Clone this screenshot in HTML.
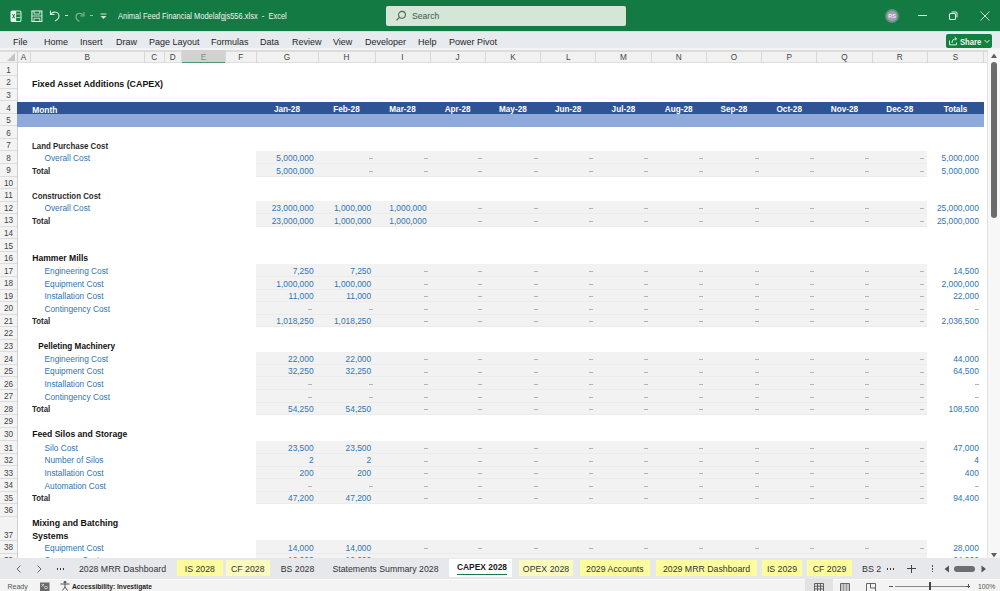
<!DOCTYPE html><html><head><meta charset="utf-8"><style>
html,body{margin:0;padding:0;}
body{width:1000px;height:591px;overflow:hidden;position:relative;background:#fff;font-family:"Liberation Sans", sans-serif;}
.t{position:absolute;white-space:nowrap;line-height:20px;height:20px;}
.b{position:absolute;}
svg{position:absolute;}
</style></head><body>
<div class="b" style="left:0.00px;top:0.00px;width:1000.00px;height:31.00px;background:#137a43;"></div>
<div class="b" style="left:0.00px;top:30.50px;width:1000.00px;height:1.00px;background:#c9e5d2;"></div>
<svg style="left:10px;top:9.5px" width="12" height="12" viewBox="0 0 12 12"><rect x="1" y="1" width="10" height="10.5" rx="1.6" fill="none" stroke="#d9eee0" stroke-width="1.1"/><rect x="1" y="1" width="5.2" height="10.5" rx="1.2" fill="#e4f3e8"/><path d="M2.6 4.2 L4.6 8.2 M4.6 4.2 L2.6 8.2" stroke="#137a43" stroke-width="1"/><path d="M6.5 4 H10.5 M6.5 7.5 H10.5" stroke="#d9eee0" stroke-width="0.8"/></svg>
<svg style="left:31px;top:9.5px" width="12" height="12" viewBox="0 0 12 12"><rect x="0.9" y="1" width="10" height="10.5" fill="none" stroke="#d9eee0" stroke-width="1.1"/><path d="M0.9 6 H10.9 M3 1 V4 H8.8 V1 M3 11.5 V8.2 H8.8 V11.5" fill="none" stroke="#d9eee0" stroke-width="0.9"/></svg>
<svg style="left:49px;top:9px" width="12" height="13" viewBox="0 0 12 13"><path d="M1.5 1.5 V5.5 H5.5" fill="none" stroke="#d9eee0" stroke-width="1.1"/><path d="M1.8 5.2 C4 2 10 2.5 10 7 C10 9.5 8 11 6 12" fill="none" stroke="#d9eee0" stroke-width="1.1"/></svg>
<div class="b" style="left:64.50px;top:14.50px;width:3.50px;height:1.20px;background:#cfe6d6;"></div>
<svg style="left:73px;top:9px" width="14" height="14" viewBox="0 0 14 14" opacity="0.45"><path d="M11 3 L11 7 L7 7" fill="none" stroke="#e8f3ec" stroke-width="1.2"/><path d="M10.5 6.5 C8 3 3 4 3 8 C3 10 4.5 11.5 6.5 12.5" fill="none" stroke="#e8f3ec" stroke-width="1.2"/></svg>
<div class="b" style="left:89.50px;top:14.50px;width:3.50px;height:1.20px;background:#8fc2a2;"></div>
<svg style="left:98px;top:10px" width="12" height="12" viewBox="0 0 12 12"><rect x="2.5" y="3.5" width="6" height="1" fill="#cfe6d6"/><path d="M2.5 6 L8.5 6 L5.5 9 Z" fill="#cfe6d6"/></svg>
<div class="t" style="left:117.50px;top:5.80px;font-size:8.8px;color:#eef6f0;font-weight:normal;transform:scaleX(0.85);transform-origin:left center;">Animal Feed Financial Modelafgjs556.xlsx&nbsp; - &nbsp;Excel</div>
<div class="b" style="left:385.50px;top:5.50px;width:240.00px;height:20.50px;background:#d5e6d9;border-radius:2px;"></div>
<svg style="left:394px;top:9px" width="14" height="14" viewBox="0 0 14 14"><circle cx="8" cy="5.8" r="3.4" fill="none" stroke="#4a6a55" stroke-width="1.1"/><path d="M5.6 8.2 L2.5 11.3" stroke="#4a6a55" stroke-width="1.2"/></svg>
<div class="t" style="left:412.00px;top:5.50px;font-size:8.6px;color:#3d5a47;font-weight:normal;">Search</div>
<svg style="left:883.5px;top:7.8px" width="16" height="16" viewBox="0 0 16 16"><circle cx="8" cy="8" r="7" fill="#5e9474"/><circle cx="8" cy="8" r="5.2" fill="#a39bb9"/><text x="8" y="10.2" font-size="5.5" text-anchor="middle" fill="#ece8f4" font-family="Liberation Sans" font-weight="bold">RS</text></svg>
<div class="b" style="left:918.00px;top:14.80px;width:9.00px;height:1.20px;background:#e8f3ec;"></div>
<svg style="left:947px;top:10px" width="12" height="12" viewBox="0 0 12 12"><rect x="2.5" y="3.5" width="6" height="6" rx="1" fill="none" stroke="#e8f3ec" stroke-width="1.1"/><path d="M4.5 2 L9 2 Q10 2 10 3 L10 7.5" fill="none" stroke="#e8f3ec" stroke-width="1"/></svg>
<svg style="left:978px;top:9px" width="14" height="14" viewBox="0 0 14 14"><path d="M2.5 2.5 L11.5 11.5 M11.5 2.5 L2.5 11.5" stroke="#d8ece0" stroke-width="0.9"/></svg>
<div class="b" style="left:0.00px;top:31.50px;width:1000.00px;height:16.50px;background:#e7eaee;"></div>
<div class="t" style="left:13.00px;top:31.50px;font-size:9px;color:#262626;font-weight:normal;">File</div>
<div class="t" style="left:44.00px;top:31.50px;font-size:9px;color:#262626;font-weight:normal;">Home</div>
<div class="t" style="left:80.00px;top:31.50px;font-size:9px;color:#262626;font-weight:normal;">Insert</div>
<div class="t" style="left:116.00px;top:31.50px;font-size:9px;color:#262626;font-weight:normal;">Draw</div>
<div class="t" style="left:149.00px;top:31.50px;font-size:9px;color:#262626;font-weight:normal;">Page Layout</div>
<div class="t" style="left:211.00px;top:31.50px;font-size:9px;color:#262626;font-weight:normal;">Formulas</div>
<div class="t" style="left:260.00px;top:31.50px;font-size:9px;color:#262626;font-weight:normal;">Data</div>
<div class="t" style="left:292.00px;top:31.50px;font-size:9px;color:#262626;font-weight:normal;">Review</div>
<div class="t" style="left:333.00px;top:31.50px;font-size:9px;color:#262626;font-weight:normal;">View</div>
<div class="t" style="left:365.00px;top:31.50px;font-size:9px;color:#262626;font-weight:normal;">Developer</div>
<div class="t" style="left:418.00px;top:31.50px;font-size:9px;color:#262626;font-weight:normal;">Help</div>
<div class="t" style="left:449.00px;top:31.50px;font-size:9px;color:#262626;font-weight:normal;">Power Pivot</div>
<div class="b" style="left:946.00px;top:33.50px;width:46.30px;height:14.80px;background:#14803f;border-radius:2px;"></div>
<svg style="left:947.5px;top:36px" width="10" height="10" viewBox="0 0 10 10"><path d="M1.5 4.5 V8.8 H8.5 V6.5" fill="none" stroke="#d6f0de" stroke-width="1"/><path d="M4 7 C4 4 5.5 2.8 8.5 2.8 M6.8 1.2 L8.6 2.8 L6.8 4.4" fill="none" stroke="#d6f0de" stroke-width="1"/></svg>
<div class="t" style="left:959.70px;top:31.50px;font-size:8.8px;color:#f0f8f2;font-weight:bold;transform:scaleX(0.87);transform-origin:left center;">Share</div>
<svg style="left:983px;top:37px" width="8" height="8" viewBox="0 0 8 8"><path d="M1.5 3 L4 5.5 L6.5 3" fill="none" stroke="#e6f4ea" stroke-width="1"/></svg>
<div class="b" style="left:0.00px;top:48.00px;width:1000.00px;height:2.50px;background:#f4f4f4;"></div>
<div class="b" style="left:0.00px;top:50.30px;width:987.50px;height:1.30px;background:#dcdcdc;"></div>
<div class="b" style="left:0.00px;top:51.60px;width:987.50px;height:10.20px;background:#f1f1f1;"></div>
<div class="b" style="left:0.00px;top:61.60px;width:987.50px;height:1.70px;background:#dedede;"></div>
<svg style="left:3px;top:52px" width="13" height="10" viewBox="0 0 13 10"><path d="M12 1 L12 9 L4 9 Z" fill="#c4c4c4"/></svg>
<div class="b" style="left:16.60px;top:50.00px;width:0.90px;height:13.00px;background:#d0d0d0;"></div>
<div class="t" style="left:-126.50px;width:300px;text-align:center;top:48.20px;font-size:8.2px;color:#444;font-weight:normal;">A</div>
<div class="b" style="left:29.50px;top:51.00px;width:0.80px;height:12.00px;background:#d8d8d8;"></div>
<div class="t" style="left:-62.75px;width:300px;text-align:center;top:48.20px;font-size:8.2px;color:#444;font-weight:normal;">B</div>
<div class="b" style="left:144.00px;top:51.00px;width:0.80px;height:12.00px;background:#d8d8d8;"></div>
<div class="t" style="left:4.25px;width:300px;text-align:center;top:48.20px;font-size:8.2px;color:#444;font-weight:normal;">C</div>
<div class="b" style="left:163.50px;top:51.00px;width:0.80px;height:12.00px;background:#d8d8d8;"></div>
<div class="t" style="left:22.75px;width:300px;text-align:center;top:48.20px;font-size:8.2px;color:#444;font-weight:normal;">D</div>
<div class="b" style="left:181.00px;top:51.00px;width:0.80px;height:12.00px;background:#d8d8d8;"></div>
<div class="b" style="left:181.50px;top:50.30px;width:44.00px;height:12.50px;background:#d2d2d2;"></div>
<div class="b" style="left:181.50px;top:61.50px;width:44.00px;height:1.60px;background:#4f9a6a;"></div>
<div class="t" style="left:53.50px;width:300px;text-align:center;top:48.20px;font-size:8.2px;color:#7d8c82;font-weight:normal;">E</div>
<div class="b" style="left:225.00px;top:51.00px;width:0.80px;height:12.00px;background:#d8d8d8;"></div>
<div class="t" style="left:90.75px;width:300px;text-align:center;top:48.20px;font-size:8.2px;color:#444;font-weight:normal;">F</div>
<div class="b" style="left:255.50px;top:51.00px;width:0.80px;height:12.00px;background:#d8d8d8;"></div>
<div class="t" style="left:137.00px;width:300px;text-align:center;top:48.20px;font-size:8.2px;color:#444;font-weight:normal;">G</div>
<div class="b" style="left:317.50px;top:51.00px;width:0.80px;height:12.00px;background:#d8d8d8;"></div>
<div class="t" style="left:196.50px;width:300px;text-align:center;top:48.20px;font-size:8.2px;color:#444;font-weight:normal;">H</div>
<div class="b" style="left:374.50px;top:51.00px;width:0.80px;height:12.00px;background:#d8d8d8;"></div>
<div class="t" style="left:252.50px;width:300px;text-align:center;top:48.20px;font-size:8.2px;color:#444;font-weight:normal;">I</div>
<div class="b" style="left:429.50px;top:51.00px;width:0.80px;height:12.00px;background:#d8d8d8;"></div>
<div class="t" style="left:307.63px;width:300px;text-align:center;top:48.20px;font-size:8.2px;color:#444;font-weight:normal;">J</div>
<div class="b" style="left:484.77px;top:51.00px;width:0.80px;height:12.00px;background:#d8d8d8;"></div>
<div class="t" style="left:362.90px;width:300px;text-align:center;top:48.20px;font-size:8.2px;color:#444;font-weight:normal;">K</div>
<div class="b" style="left:540.03px;top:51.00px;width:0.80px;height:12.00px;background:#d8d8d8;"></div>
<div class="t" style="left:418.17px;width:300px;text-align:center;top:48.20px;font-size:8.2px;color:#444;font-weight:normal;">L</div>
<div class="b" style="left:595.30px;top:51.00px;width:0.80px;height:12.00px;background:#d8d8d8;"></div>
<div class="t" style="left:473.43px;width:300px;text-align:center;top:48.20px;font-size:8.2px;color:#444;font-weight:normal;">M</div>
<div class="b" style="left:650.57px;top:51.00px;width:0.80px;height:12.00px;background:#d8d8d8;"></div>
<div class="t" style="left:528.70px;width:300px;text-align:center;top:48.20px;font-size:8.2px;color:#444;font-weight:normal;">N</div>
<div class="b" style="left:705.83px;top:51.00px;width:0.80px;height:12.00px;background:#d8d8d8;"></div>
<div class="t" style="left:583.97px;width:300px;text-align:center;top:48.20px;font-size:8.2px;color:#444;font-weight:normal;">O</div>
<div class="b" style="left:761.10px;top:51.00px;width:0.80px;height:12.00px;background:#d8d8d8;"></div>
<div class="t" style="left:639.23px;width:300px;text-align:center;top:48.20px;font-size:8.2px;color:#444;font-weight:normal;">P</div>
<div class="b" style="left:816.37px;top:51.00px;width:0.80px;height:12.00px;background:#d8d8d8;"></div>
<div class="t" style="left:694.50px;width:300px;text-align:center;top:48.20px;font-size:8.2px;color:#444;font-weight:normal;">Q</div>
<div class="b" style="left:871.63px;top:51.00px;width:0.80px;height:12.00px;background:#d8d8d8;"></div>
<div class="t" style="left:749.77px;width:300px;text-align:center;top:48.20px;font-size:8.2px;color:#444;font-weight:normal;">R</div>
<div class="b" style="left:926.90px;top:51.00px;width:0.80px;height:12.00px;background:#d8d8d8;"></div>
<div class="t" style="left:805.50px;width:300px;text-align:center;top:48.20px;font-size:8.2px;color:#444;font-weight:normal;">S</div>
<div class="b" style="left:983.10px;top:51.00px;width:0.80px;height:12.00px;background:#d8d8d8;"></div>
<div class="b" style="left:0.00px;top:63.00px;width:17.00px;height:496.50px;background:#f3f3f3;"></div>
<div class="b" style="left:16.60px;top:63.00px;width:0.90px;height:496.50px;background:#cfcfcf;"></div>
<div class="b" style="left:0.00px;top:75.15px;width:16.60px;height:0.80px;background:#dcdcdc;"></div>
<div class="t" style="left:-141.50px;width:300px;text-align:center;top:60.88px;font-size:8.2px;color:#444;font-weight:normal;">1</div>
<div class="b" style="left:0.00px;top:87.70px;width:16.60px;height:0.80px;background:#dcdcdc;"></div>
<div class="t" style="left:-141.50px;width:300px;text-align:center;top:73.42px;font-size:8.2px;color:#444;font-weight:normal;">2</div>
<div class="b" style="left:0.00px;top:100.25px;width:16.60px;height:0.80px;background:#dcdcdc;"></div>
<div class="t" style="left:-141.50px;width:300px;text-align:center;top:85.97px;font-size:8.2px;color:#444;font-weight:normal;">3</div>
<div class="b" style="left:0.00px;top:112.80px;width:16.60px;height:0.80px;background:#dcdcdc;"></div>
<div class="t" style="left:-141.50px;width:300px;text-align:center;top:98.52px;font-size:8.2px;color:#444;font-weight:normal;">4</div>
<div class="b" style="left:0.00px;top:125.35px;width:16.60px;height:0.80px;background:#dcdcdc;"></div>
<div class="t" style="left:-141.50px;width:300px;text-align:center;top:111.07px;font-size:8.2px;color:#444;font-weight:normal;">5</div>
<div class="b" style="left:0.00px;top:137.90px;width:16.60px;height:0.80px;background:#dcdcdc;"></div>
<div class="t" style="left:-141.50px;width:300px;text-align:center;top:123.62px;font-size:8.2px;color:#444;font-weight:normal;">6</div>
<div class="b" style="left:0.00px;top:150.45px;width:16.60px;height:0.80px;background:#dcdcdc;"></div>
<div class="t" style="left:-141.50px;width:300px;text-align:center;top:136.17px;font-size:8.2px;color:#444;font-weight:normal;">7</div>
<div class="b" style="left:0.00px;top:163.00px;width:16.60px;height:0.80px;background:#dcdcdc;"></div>
<div class="t" style="left:-141.50px;width:300px;text-align:center;top:148.72px;font-size:8.2px;color:#444;font-weight:normal;">8</div>
<div class="b" style="left:0.00px;top:175.55px;width:16.60px;height:0.80px;background:#dcdcdc;"></div>
<div class="t" style="left:-141.50px;width:300px;text-align:center;top:161.28px;font-size:8.2px;color:#444;font-weight:normal;">9</div>
<div class="b" style="left:0.00px;top:188.10px;width:16.60px;height:0.80px;background:#dcdcdc;"></div>
<div class="t" style="left:-141.50px;width:300px;text-align:center;top:173.83px;font-size:8.2px;color:#444;font-weight:normal;">10</div>
<div class="b" style="left:0.00px;top:200.65px;width:16.60px;height:0.80px;background:#dcdcdc;"></div>
<div class="t" style="left:-141.50px;width:300px;text-align:center;top:186.38px;font-size:8.2px;color:#444;font-weight:normal;">11</div>
<div class="b" style="left:0.00px;top:213.20px;width:16.60px;height:0.80px;background:#dcdcdc;"></div>
<div class="t" style="left:-141.50px;width:300px;text-align:center;top:198.93px;font-size:8.2px;color:#444;font-weight:normal;">12</div>
<div class="b" style="left:0.00px;top:225.75px;width:16.60px;height:0.80px;background:#dcdcdc;"></div>
<div class="t" style="left:-141.50px;width:300px;text-align:center;top:211.48px;font-size:8.2px;color:#444;font-weight:normal;">13</div>
<div class="b" style="left:0.00px;top:238.30px;width:16.60px;height:0.80px;background:#dcdcdc;"></div>
<div class="t" style="left:-141.50px;width:300px;text-align:center;top:224.03px;font-size:8.2px;color:#444;font-weight:normal;">14</div>
<div class="b" style="left:0.00px;top:250.85px;width:16.60px;height:0.80px;background:#dcdcdc;"></div>
<div class="t" style="left:-141.50px;width:300px;text-align:center;top:236.58px;font-size:8.2px;color:#444;font-weight:normal;">15</div>
<div class="b" style="left:0.00px;top:263.40px;width:16.60px;height:0.80px;background:#dcdcdc;"></div>
<div class="t" style="left:-141.50px;width:300px;text-align:center;top:249.13px;font-size:8.2px;color:#444;font-weight:normal;">16</div>
<div class="b" style="left:0.00px;top:275.95px;width:16.60px;height:0.80px;background:#dcdcdc;"></div>
<div class="t" style="left:-141.50px;width:300px;text-align:center;top:261.68px;font-size:8.2px;color:#444;font-weight:normal;">17</div>
<div class="b" style="left:0.00px;top:288.50px;width:16.60px;height:0.80px;background:#dcdcdc;"></div>
<div class="t" style="left:-141.50px;width:300px;text-align:center;top:274.23px;font-size:8.2px;color:#444;font-weight:normal;">18</div>
<div class="b" style="left:0.00px;top:301.05px;width:16.60px;height:0.80px;background:#dcdcdc;"></div>
<div class="t" style="left:-141.50px;width:300px;text-align:center;top:286.78px;font-size:8.2px;color:#444;font-weight:normal;">19</div>
<div class="b" style="left:0.00px;top:313.60px;width:16.60px;height:0.80px;background:#dcdcdc;"></div>
<div class="t" style="left:-141.50px;width:300px;text-align:center;top:299.33px;font-size:8.2px;color:#444;font-weight:normal;">20</div>
<div class="b" style="left:0.00px;top:326.15px;width:16.60px;height:0.80px;background:#dcdcdc;"></div>
<div class="t" style="left:-141.50px;width:300px;text-align:center;top:311.88px;font-size:8.2px;color:#444;font-weight:normal;">21</div>
<div class="b" style="left:0.00px;top:338.70px;width:16.60px;height:0.80px;background:#dcdcdc;"></div>
<div class="t" style="left:-141.50px;width:300px;text-align:center;top:324.43px;font-size:8.2px;color:#444;font-weight:normal;">22</div>
<div class="b" style="left:0.00px;top:351.25px;width:16.60px;height:0.80px;background:#dcdcdc;"></div>
<div class="t" style="left:-141.50px;width:300px;text-align:center;top:336.98px;font-size:8.2px;color:#444;font-weight:normal;">23</div>
<div class="b" style="left:0.00px;top:363.80px;width:16.60px;height:0.80px;background:#dcdcdc;"></div>
<div class="t" style="left:-141.50px;width:300px;text-align:center;top:349.53px;font-size:8.2px;color:#444;font-weight:normal;">24</div>
<div class="b" style="left:0.00px;top:376.35px;width:16.60px;height:0.80px;background:#dcdcdc;"></div>
<div class="t" style="left:-141.50px;width:300px;text-align:center;top:362.08px;font-size:8.2px;color:#444;font-weight:normal;">25</div>
<div class="b" style="left:0.00px;top:388.90px;width:16.60px;height:0.80px;background:#dcdcdc;"></div>
<div class="t" style="left:-141.50px;width:300px;text-align:center;top:374.63px;font-size:8.2px;color:#444;font-weight:normal;">26</div>
<div class="b" style="left:0.00px;top:401.45px;width:16.60px;height:0.80px;background:#dcdcdc;"></div>
<div class="t" style="left:-141.50px;width:300px;text-align:center;top:387.18px;font-size:8.2px;color:#444;font-weight:normal;">27</div>
<div class="b" style="left:0.00px;top:414.00px;width:16.60px;height:0.80px;background:#dcdcdc;"></div>
<div class="t" style="left:-141.50px;width:300px;text-align:center;top:399.73px;font-size:8.2px;color:#444;font-weight:normal;">28</div>
<div class="b" style="left:0.00px;top:426.55px;width:16.60px;height:0.80px;background:#dcdcdc;"></div>
<div class="t" style="left:-141.50px;width:300px;text-align:center;top:412.28px;font-size:8.2px;color:#444;font-weight:normal;">29</div>
<div class="b" style="left:0.00px;top:440.30px;width:16.60px;height:0.80px;background:#dcdcdc;"></div>
<div class="t" style="left:-141.50px;width:300px;text-align:center;top:425.43px;font-size:8.2px;color:#444;font-weight:normal;">30</div>
<div class="b" style="left:0.00px;top:452.85px;width:16.60px;height:0.80px;background:#dcdcdc;"></div>
<div class="t" style="left:-141.50px;width:300px;text-align:center;top:438.58px;font-size:8.2px;color:#444;font-weight:normal;">31</div>
<div class="b" style="left:0.00px;top:465.40px;width:16.60px;height:0.80px;background:#dcdcdc;"></div>
<div class="t" style="left:-141.50px;width:300px;text-align:center;top:451.13px;font-size:8.2px;color:#444;font-weight:normal;">32</div>
<div class="b" style="left:0.00px;top:477.95px;width:16.60px;height:0.80px;background:#dcdcdc;"></div>
<div class="t" style="left:-141.50px;width:300px;text-align:center;top:463.68px;font-size:8.2px;color:#444;font-weight:normal;">33</div>
<div class="b" style="left:0.00px;top:490.50px;width:16.60px;height:0.80px;background:#dcdcdc;"></div>
<div class="t" style="left:-141.50px;width:300px;text-align:center;top:476.23px;font-size:8.2px;color:#444;font-weight:normal;">34</div>
<div class="b" style="left:0.00px;top:503.05px;width:16.60px;height:0.80px;background:#dcdcdc;"></div>
<div class="t" style="left:-141.50px;width:300px;text-align:center;top:488.78px;font-size:8.2px;color:#444;font-weight:normal;">35</div>
<div class="b" style="left:0.00px;top:515.60px;width:16.60px;height:0.80px;background:#dcdcdc;"></div>
<div class="t" style="left:-141.50px;width:300px;text-align:center;top:501.33px;font-size:8.2px;color:#444;font-weight:normal;">36</div>
<div class="b" style="left:0.00px;top:540.00px;width:16.60px;height:0.80px;background:#dcdcdc;"></div>
<div class="t" style="left:-141.50px;width:300px;text-align:center;top:526.20px;font-size:8.2px;color:#444;font-weight:normal;">37</div>
<div class="b" style="left:0.00px;top:552.55px;width:16.60px;height:0.80px;background:#dcdcdc;"></div>
<div class="t" style="left:-141.50px;width:300px;text-align:center;top:538.28px;font-size:8.2px;color:#444;font-weight:normal;">38</div>
<div class="b" style="left:0.00px;top:565.10px;width:16.60px;height:0.80px;background:#dcdcdc;"></div>
<div class="t" style="left:-141.50px;width:300px;text-align:center;top:550.83px;font-size:8.2px;color:#444;font-weight:normal;">39</div>
<div class="b" style="left:17.00px;top:101.60px;width:966.60px;height:12.15px;background:#2f5496;"></div>
<div class="b" style="left:17.00px;top:113.75px;width:966.60px;height:13.00px;background:#8eaadb;"></div>
<div class="t" style="left:32.00px;top:74.10px;font-size:8.85px;color:#111;font-weight:bold;">Fixed Asset Additions (CAPEX)</div>
<div class="t" style="left:32.20px;top:99.55px;font-size:8.4px;color:#fff;font-weight:bold;">Month</div>
<div class="t" style="left:137.00px;width:300px;text-align:center;top:99.55px;font-size:8.2px;color:#fff;font-weight:bold;">Jan-28</div>
<div class="t" style="left:196.50px;width:300px;text-align:center;top:99.55px;font-size:8.2px;color:#fff;font-weight:bold;">Feb-28</div>
<div class="t" style="left:252.50px;width:300px;text-align:center;top:99.55px;font-size:8.2px;color:#fff;font-weight:bold;">Mar-28</div>
<div class="t" style="left:307.63px;width:300px;text-align:center;top:99.55px;font-size:8.2px;color:#fff;font-weight:bold;">Apr-28</div>
<div class="t" style="left:362.90px;width:300px;text-align:center;top:99.55px;font-size:8.2px;color:#fff;font-weight:bold;">May-28</div>
<div class="t" style="left:418.17px;width:300px;text-align:center;top:99.55px;font-size:8.2px;color:#fff;font-weight:bold;">Jun-28</div>
<div class="t" style="left:473.43px;width:300px;text-align:center;top:99.55px;font-size:8.2px;color:#fff;font-weight:bold;">Jul-28</div>
<div class="t" style="left:528.70px;width:300px;text-align:center;top:99.55px;font-size:8.2px;color:#fff;font-weight:bold;">Aug-28</div>
<div class="t" style="left:583.97px;width:300px;text-align:center;top:99.55px;font-size:8.2px;color:#fff;font-weight:bold;">Sep-28</div>
<div class="t" style="left:639.23px;width:300px;text-align:center;top:99.55px;font-size:8.2px;color:#fff;font-weight:bold;">Oct-28</div>
<div class="t" style="left:694.50px;width:300px;text-align:center;top:99.55px;font-size:8.2px;color:#fff;font-weight:bold;">Nov-28</div>
<div class="t" style="left:749.77px;width:300px;text-align:center;top:99.55px;font-size:8.2px;color:#fff;font-weight:bold;">Dec-28</div>
<div class="t" style="left:805.50px;width:300px;text-align:center;top:99.55px;font-size:8.2px;color:#fff;font-weight:bold;">Totals</div>
<div class="t" style="left:32.20px;top:135.50px;font-size:8.4px;color:#2b2b2b;font-weight:bold;transform:scaleX(0.94);transform-origin:left center;">Land Purchase Cost</div>
<div class="b" style="left:256.00px;top:150.85px;width:671.40px;height:25.90px;background:#f2f2f2;"></div>
<div class="b" style="left:256.00px;top:163.10px;width:671.40px;height:1.00px;background:#ebebeb;"></div>
<div class="b" style="left:256.00px;top:175.65px;width:671.40px;height:1.00px;background:#ebebeb;"></div>
<div class="t" style="left:44.50px;top:148.05px;font-size:8.3px;color:#2e75b6;font-weight:normal;">Overall Cost</div>
<div class="t" style="left:13.60px;width:300px;text-align:right;top:148.05px;font-size:8.4px;color:#2e75b6;font-weight:normal;">5,000,000</div>
<div class="b" style="left:368.50px;top:158.25px;width:4.00px;height:1.00px;background:#b4b4b4;"></div>
<div class="b" style="left:424.00px;top:158.25px;width:4.00px;height:1.00px;background:#b4b4b4;"></div>
<div class="b" style="left:478.27px;top:158.25px;width:4.00px;height:1.00px;background:#b4b4b4;"></div>
<div class="b" style="left:533.53px;top:158.25px;width:4.00px;height:1.00px;background:#b4b4b4;"></div>
<div class="b" style="left:588.80px;top:158.25px;width:4.00px;height:1.00px;background:#b4b4b4;"></div>
<div class="b" style="left:644.07px;top:158.25px;width:4.00px;height:1.00px;background:#b4b4b4;"></div>
<div class="b" style="left:699.33px;top:158.25px;width:4.00px;height:1.00px;background:#b4b4b4;"></div>
<div class="b" style="left:754.60px;top:158.25px;width:4.00px;height:1.00px;background:#b4b4b4;"></div>
<div class="b" style="left:809.87px;top:158.25px;width:4.00px;height:1.00px;background:#b4b4b4;"></div>
<div class="b" style="left:865.13px;top:158.25px;width:4.00px;height:1.00px;background:#b4b4b4;"></div>
<div class="b" style="left:920.40px;top:158.25px;width:4.00px;height:1.00px;background:#b4b4b4;"></div>
<div class="t" style="left:678.80px;width:300px;text-align:right;top:148.05px;font-size:8.4px;color:#2e75b6;font-weight:normal;">5,000,000</div>
<div class="t" style="left:32.20px;top:160.60px;font-size:8.4px;color:#2b2b2b;font-weight:bold;transform:scaleX(0.94);transform-origin:left center;">Total</div>
<div class="t" style="left:13.60px;width:300px;text-align:right;top:160.60px;font-size:8.4px;color:#2e75b6;font-weight:normal;">5,000,000</div>
<div class="b" style="left:368.50px;top:170.80px;width:4.00px;height:1.00px;background:#b4b4b4;"></div>
<div class="b" style="left:424.00px;top:170.80px;width:4.00px;height:1.00px;background:#b4b4b4;"></div>
<div class="b" style="left:478.27px;top:170.80px;width:4.00px;height:1.00px;background:#b4b4b4;"></div>
<div class="b" style="left:533.53px;top:170.80px;width:4.00px;height:1.00px;background:#b4b4b4;"></div>
<div class="b" style="left:588.80px;top:170.80px;width:4.00px;height:1.00px;background:#b4b4b4;"></div>
<div class="b" style="left:644.07px;top:170.80px;width:4.00px;height:1.00px;background:#b4b4b4;"></div>
<div class="b" style="left:699.33px;top:170.80px;width:4.00px;height:1.00px;background:#b4b4b4;"></div>
<div class="b" style="left:754.60px;top:170.80px;width:4.00px;height:1.00px;background:#b4b4b4;"></div>
<div class="b" style="left:809.87px;top:170.80px;width:4.00px;height:1.00px;background:#b4b4b4;"></div>
<div class="b" style="left:865.13px;top:170.80px;width:4.00px;height:1.00px;background:#b4b4b4;"></div>
<div class="b" style="left:920.40px;top:170.80px;width:4.00px;height:1.00px;background:#b4b4b4;"></div>
<div class="t" style="left:678.80px;width:300px;text-align:right;top:160.60px;font-size:8.4px;color:#2e75b6;font-weight:normal;">5,000,000</div>
<div class="t" style="left:32.20px;top:185.70px;font-size:8.4px;color:#2b2b2b;font-weight:bold;transform:scaleX(0.94);transform-origin:left center;">Construction Cost</div>
<div class="b" style="left:256.00px;top:201.05px;width:671.40px;height:25.90px;background:#f2f2f2;"></div>
<div class="b" style="left:256.00px;top:213.30px;width:671.40px;height:1.00px;background:#ebebeb;"></div>
<div class="b" style="left:256.00px;top:225.85px;width:671.40px;height:1.00px;background:#ebebeb;"></div>
<div class="t" style="left:44.50px;top:198.25px;font-size:8.3px;color:#2e75b6;font-weight:normal;">Overall Cost</div>
<div class="t" style="left:13.60px;width:300px;text-align:right;top:198.25px;font-size:8.4px;color:#2e75b6;font-weight:normal;">23,000,000</div>
<div class="t" style="left:71.20px;width:300px;text-align:right;top:198.25px;font-size:8.4px;color:#2e75b6;font-weight:normal;">1,000,000</div>
<div class="t" style="left:126.60px;width:300px;text-align:right;top:198.25px;font-size:8.4px;color:#2e75b6;font-weight:normal;">1,000,000</div>
<div class="b" style="left:478.27px;top:208.45px;width:4.00px;height:1.00px;background:#b4b4b4;"></div>
<div class="b" style="left:533.53px;top:208.45px;width:4.00px;height:1.00px;background:#b4b4b4;"></div>
<div class="b" style="left:588.80px;top:208.45px;width:4.00px;height:1.00px;background:#b4b4b4;"></div>
<div class="b" style="left:644.07px;top:208.45px;width:4.00px;height:1.00px;background:#b4b4b4;"></div>
<div class="b" style="left:699.33px;top:208.45px;width:4.00px;height:1.00px;background:#b4b4b4;"></div>
<div class="b" style="left:754.60px;top:208.45px;width:4.00px;height:1.00px;background:#b4b4b4;"></div>
<div class="b" style="left:809.87px;top:208.45px;width:4.00px;height:1.00px;background:#b4b4b4;"></div>
<div class="b" style="left:865.13px;top:208.45px;width:4.00px;height:1.00px;background:#b4b4b4;"></div>
<div class="b" style="left:920.40px;top:208.45px;width:4.00px;height:1.00px;background:#b4b4b4;"></div>
<div class="t" style="left:678.80px;width:300px;text-align:right;top:198.25px;font-size:8.4px;color:#2e75b6;font-weight:normal;">25,000,000</div>
<div class="t" style="left:32.20px;top:210.80px;font-size:8.4px;color:#2b2b2b;font-weight:bold;transform:scaleX(0.94);transform-origin:left center;">Total</div>
<div class="t" style="left:13.60px;width:300px;text-align:right;top:210.80px;font-size:8.4px;color:#2e75b6;font-weight:normal;">23,000,000</div>
<div class="t" style="left:71.20px;width:300px;text-align:right;top:210.80px;font-size:8.4px;color:#2e75b6;font-weight:normal;">1,000,000</div>
<div class="t" style="left:126.60px;width:300px;text-align:right;top:210.80px;font-size:8.4px;color:#2e75b6;font-weight:normal;">1,000,000</div>
<div class="b" style="left:478.27px;top:221.00px;width:4.00px;height:1.00px;background:#b4b4b4;"></div>
<div class="b" style="left:533.53px;top:221.00px;width:4.00px;height:1.00px;background:#b4b4b4;"></div>
<div class="b" style="left:588.80px;top:221.00px;width:4.00px;height:1.00px;background:#b4b4b4;"></div>
<div class="b" style="left:644.07px;top:221.00px;width:4.00px;height:1.00px;background:#b4b4b4;"></div>
<div class="b" style="left:699.33px;top:221.00px;width:4.00px;height:1.00px;background:#b4b4b4;"></div>
<div class="b" style="left:754.60px;top:221.00px;width:4.00px;height:1.00px;background:#b4b4b4;"></div>
<div class="b" style="left:809.87px;top:221.00px;width:4.00px;height:1.00px;background:#b4b4b4;"></div>
<div class="b" style="left:865.13px;top:221.00px;width:4.00px;height:1.00px;background:#b4b4b4;"></div>
<div class="b" style="left:920.40px;top:221.00px;width:4.00px;height:1.00px;background:#b4b4b4;"></div>
<div class="t" style="left:678.80px;width:300px;text-align:right;top:210.80px;font-size:8.4px;color:#2e75b6;font-weight:normal;">25,000,000</div>
<div class="t" style="left:32.20px;top:248.45px;font-size:8.6px;color:#111;font-weight:bold;">Hammer Mills</div>
<div class="b" style="left:256.00px;top:263.80px;width:671.40px;height:63.55px;background:#f2f2f2;"></div>
<div class="b" style="left:256.00px;top:276.05px;width:671.40px;height:1.00px;background:#ebebeb;"></div>
<div class="b" style="left:256.00px;top:288.60px;width:671.40px;height:1.00px;background:#ebebeb;"></div>
<div class="b" style="left:256.00px;top:301.15px;width:671.40px;height:1.00px;background:#ebebeb;"></div>
<div class="b" style="left:256.00px;top:313.70px;width:671.40px;height:1.00px;background:#ebebeb;"></div>
<div class="b" style="left:256.00px;top:326.25px;width:671.40px;height:1.00px;background:#ebebeb;"></div>
<div class="t" style="left:44.50px;top:261.00px;font-size:8.3px;color:#2e75b6;font-weight:normal;">Engineering Cost</div>
<div class="t" style="left:13.60px;width:300px;text-align:right;top:261.00px;font-size:8.4px;color:#2e75b6;font-weight:normal;">7,250</div>
<div class="t" style="left:71.20px;width:300px;text-align:right;top:261.00px;font-size:8.4px;color:#2e75b6;font-weight:normal;">7,250</div>
<div class="b" style="left:424.00px;top:271.20px;width:4.00px;height:1.00px;background:#b4b4b4;"></div>
<div class="b" style="left:478.27px;top:271.20px;width:4.00px;height:1.00px;background:#b4b4b4;"></div>
<div class="b" style="left:533.53px;top:271.20px;width:4.00px;height:1.00px;background:#b4b4b4;"></div>
<div class="b" style="left:588.80px;top:271.20px;width:4.00px;height:1.00px;background:#b4b4b4;"></div>
<div class="b" style="left:644.07px;top:271.20px;width:4.00px;height:1.00px;background:#b4b4b4;"></div>
<div class="b" style="left:699.33px;top:271.20px;width:4.00px;height:1.00px;background:#b4b4b4;"></div>
<div class="b" style="left:754.60px;top:271.20px;width:4.00px;height:1.00px;background:#b4b4b4;"></div>
<div class="b" style="left:809.87px;top:271.20px;width:4.00px;height:1.00px;background:#b4b4b4;"></div>
<div class="b" style="left:865.13px;top:271.20px;width:4.00px;height:1.00px;background:#b4b4b4;"></div>
<div class="b" style="left:920.40px;top:271.20px;width:4.00px;height:1.00px;background:#b4b4b4;"></div>
<div class="t" style="left:678.80px;width:300px;text-align:right;top:261.00px;font-size:8.4px;color:#2e75b6;font-weight:normal;">14,500</div>
<div class="t" style="left:44.50px;top:273.55px;font-size:8.3px;color:#2e75b6;font-weight:normal;">Equipment Cost</div>
<div class="t" style="left:13.60px;width:300px;text-align:right;top:273.55px;font-size:8.4px;color:#2e75b6;font-weight:normal;">1,000,000</div>
<div class="t" style="left:71.20px;width:300px;text-align:right;top:273.55px;font-size:8.4px;color:#2e75b6;font-weight:normal;">1,000,000</div>
<div class="b" style="left:424.00px;top:283.75px;width:4.00px;height:1.00px;background:#b4b4b4;"></div>
<div class="b" style="left:478.27px;top:283.75px;width:4.00px;height:1.00px;background:#b4b4b4;"></div>
<div class="b" style="left:533.53px;top:283.75px;width:4.00px;height:1.00px;background:#b4b4b4;"></div>
<div class="b" style="left:588.80px;top:283.75px;width:4.00px;height:1.00px;background:#b4b4b4;"></div>
<div class="b" style="left:644.07px;top:283.75px;width:4.00px;height:1.00px;background:#b4b4b4;"></div>
<div class="b" style="left:699.33px;top:283.75px;width:4.00px;height:1.00px;background:#b4b4b4;"></div>
<div class="b" style="left:754.60px;top:283.75px;width:4.00px;height:1.00px;background:#b4b4b4;"></div>
<div class="b" style="left:809.87px;top:283.75px;width:4.00px;height:1.00px;background:#b4b4b4;"></div>
<div class="b" style="left:865.13px;top:283.75px;width:4.00px;height:1.00px;background:#b4b4b4;"></div>
<div class="b" style="left:920.40px;top:283.75px;width:4.00px;height:1.00px;background:#b4b4b4;"></div>
<div class="t" style="left:678.80px;width:300px;text-align:right;top:273.55px;font-size:8.4px;color:#2e75b6;font-weight:normal;">2,000,000</div>
<div class="t" style="left:44.50px;top:286.10px;font-size:8.3px;color:#2e75b6;font-weight:normal;">Installation Cost</div>
<div class="t" style="left:13.60px;width:300px;text-align:right;top:286.10px;font-size:8.4px;color:#2e75b6;font-weight:normal;">11,000</div>
<div class="t" style="left:71.20px;width:300px;text-align:right;top:286.10px;font-size:8.4px;color:#2e75b6;font-weight:normal;">11,000</div>
<div class="b" style="left:424.00px;top:296.30px;width:4.00px;height:1.00px;background:#b4b4b4;"></div>
<div class="b" style="left:478.27px;top:296.30px;width:4.00px;height:1.00px;background:#b4b4b4;"></div>
<div class="b" style="left:533.53px;top:296.30px;width:4.00px;height:1.00px;background:#b4b4b4;"></div>
<div class="b" style="left:588.80px;top:296.30px;width:4.00px;height:1.00px;background:#b4b4b4;"></div>
<div class="b" style="left:644.07px;top:296.30px;width:4.00px;height:1.00px;background:#b4b4b4;"></div>
<div class="b" style="left:699.33px;top:296.30px;width:4.00px;height:1.00px;background:#b4b4b4;"></div>
<div class="b" style="left:754.60px;top:296.30px;width:4.00px;height:1.00px;background:#b4b4b4;"></div>
<div class="b" style="left:809.87px;top:296.30px;width:4.00px;height:1.00px;background:#b4b4b4;"></div>
<div class="b" style="left:865.13px;top:296.30px;width:4.00px;height:1.00px;background:#b4b4b4;"></div>
<div class="b" style="left:920.40px;top:296.30px;width:4.00px;height:1.00px;background:#b4b4b4;"></div>
<div class="t" style="left:678.80px;width:300px;text-align:right;top:286.10px;font-size:8.4px;color:#2e75b6;font-weight:normal;">22,000</div>
<div class="t" style="left:44.50px;top:298.65px;font-size:8.3px;color:#2e75b6;font-weight:normal;">Contingency Cost</div>
<div class="b" style="left:308.00px;top:308.85px;width:4.00px;height:1.00px;background:#b4b4b4;"></div>
<div class="b" style="left:368.50px;top:308.85px;width:4.00px;height:1.00px;background:#b4b4b4;"></div>
<div class="b" style="left:424.00px;top:308.85px;width:4.00px;height:1.00px;background:#b4b4b4;"></div>
<div class="b" style="left:478.27px;top:308.85px;width:4.00px;height:1.00px;background:#b4b4b4;"></div>
<div class="b" style="left:533.53px;top:308.85px;width:4.00px;height:1.00px;background:#b4b4b4;"></div>
<div class="b" style="left:588.80px;top:308.85px;width:4.00px;height:1.00px;background:#b4b4b4;"></div>
<div class="b" style="left:644.07px;top:308.85px;width:4.00px;height:1.00px;background:#b4b4b4;"></div>
<div class="b" style="left:699.33px;top:308.85px;width:4.00px;height:1.00px;background:#b4b4b4;"></div>
<div class="b" style="left:754.60px;top:308.85px;width:4.00px;height:1.00px;background:#b4b4b4;"></div>
<div class="b" style="left:809.87px;top:308.85px;width:4.00px;height:1.00px;background:#b4b4b4;"></div>
<div class="b" style="left:865.13px;top:308.85px;width:4.00px;height:1.00px;background:#b4b4b4;"></div>
<div class="b" style="left:920.40px;top:308.85px;width:4.00px;height:1.00px;background:#b4b4b4;"></div>
<div class="b" style="left:975.00px;top:308.85px;width:4.00px;height:1.00px;background:#b4b4b4;"></div>
<div class="t" style="left:32.20px;top:311.20px;font-size:8.4px;color:#2b2b2b;font-weight:bold;transform:scaleX(0.94);transform-origin:left center;">Total</div>
<div class="t" style="left:13.60px;width:300px;text-align:right;top:311.20px;font-size:8.4px;color:#2e75b6;font-weight:normal;">1,018,250</div>
<div class="t" style="left:71.20px;width:300px;text-align:right;top:311.20px;font-size:8.4px;color:#2e75b6;font-weight:normal;">1,018,250</div>
<div class="b" style="left:424.00px;top:321.40px;width:4.00px;height:1.00px;background:#b4b4b4;"></div>
<div class="b" style="left:478.27px;top:321.40px;width:4.00px;height:1.00px;background:#b4b4b4;"></div>
<div class="b" style="left:533.53px;top:321.40px;width:4.00px;height:1.00px;background:#b4b4b4;"></div>
<div class="b" style="left:588.80px;top:321.40px;width:4.00px;height:1.00px;background:#b4b4b4;"></div>
<div class="b" style="left:644.07px;top:321.40px;width:4.00px;height:1.00px;background:#b4b4b4;"></div>
<div class="b" style="left:699.33px;top:321.40px;width:4.00px;height:1.00px;background:#b4b4b4;"></div>
<div class="b" style="left:754.60px;top:321.40px;width:4.00px;height:1.00px;background:#b4b4b4;"></div>
<div class="b" style="left:809.87px;top:321.40px;width:4.00px;height:1.00px;background:#b4b4b4;"></div>
<div class="b" style="left:865.13px;top:321.40px;width:4.00px;height:1.00px;background:#b4b4b4;"></div>
<div class="b" style="left:920.40px;top:321.40px;width:4.00px;height:1.00px;background:#b4b4b4;"></div>
<div class="t" style="left:678.80px;width:300px;text-align:right;top:311.20px;font-size:8.4px;color:#2e75b6;font-weight:normal;">2,036,500</div>
<div class="t" style="left:38.20px;top:337.10px;font-size:8.2px;color:#111;font-weight:bold;">Pelleting Machinery</div>
<div class="b" style="left:256.00px;top:351.65px;width:671.40px;height:63.55px;background:#f2f2f2;"></div>
<div class="b" style="left:256.00px;top:363.90px;width:671.40px;height:1.00px;background:#ebebeb;"></div>
<div class="b" style="left:256.00px;top:376.45px;width:671.40px;height:1.00px;background:#ebebeb;"></div>
<div class="b" style="left:256.00px;top:389.00px;width:671.40px;height:1.00px;background:#ebebeb;"></div>
<div class="b" style="left:256.00px;top:401.55px;width:671.40px;height:1.00px;background:#ebebeb;"></div>
<div class="b" style="left:256.00px;top:414.10px;width:671.40px;height:1.00px;background:#ebebeb;"></div>
<div class="t" style="left:44.50px;top:348.85px;font-size:8.3px;color:#2e75b6;font-weight:normal;">Engineering Cost</div>
<div class="t" style="left:13.60px;width:300px;text-align:right;top:348.85px;font-size:8.4px;color:#2e75b6;font-weight:normal;">22,000</div>
<div class="t" style="left:71.20px;width:300px;text-align:right;top:348.85px;font-size:8.4px;color:#2e75b6;font-weight:normal;">22,000</div>
<div class="b" style="left:424.00px;top:359.05px;width:4.00px;height:1.00px;background:#b4b4b4;"></div>
<div class="b" style="left:478.27px;top:359.05px;width:4.00px;height:1.00px;background:#b4b4b4;"></div>
<div class="b" style="left:533.53px;top:359.05px;width:4.00px;height:1.00px;background:#b4b4b4;"></div>
<div class="b" style="left:588.80px;top:359.05px;width:4.00px;height:1.00px;background:#b4b4b4;"></div>
<div class="b" style="left:644.07px;top:359.05px;width:4.00px;height:1.00px;background:#b4b4b4;"></div>
<div class="b" style="left:699.33px;top:359.05px;width:4.00px;height:1.00px;background:#b4b4b4;"></div>
<div class="b" style="left:754.60px;top:359.05px;width:4.00px;height:1.00px;background:#b4b4b4;"></div>
<div class="b" style="left:809.87px;top:359.05px;width:4.00px;height:1.00px;background:#b4b4b4;"></div>
<div class="b" style="left:865.13px;top:359.05px;width:4.00px;height:1.00px;background:#b4b4b4;"></div>
<div class="b" style="left:920.40px;top:359.05px;width:4.00px;height:1.00px;background:#b4b4b4;"></div>
<div class="t" style="left:678.80px;width:300px;text-align:right;top:348.85px;font-size:8.4px;color:#2e75b6;font-weight:normal;">44,000</div>
<div class="t" style="left:44.50px;top:361.40px;font-size:8.3px;color:#2e75b6;font-weight:normal;">Equipment Cost</div>
<div class="t" style="left:13.60px;width:300px;text-align:right;top:361.40px;font-size:8.4px;color:#2e75b6;font-weight:normal;">32,250</div>
<div class="t" style="left:71.20px;width:300px;text-align:right;top:361.40px;font-size:8.4px;color:#2e75b6;font-weight:normal;">32,250</div>
<div class="b" style="left:424.00px;top:371.60px;width:4.00px;height:1.00px;background:#b4b4b4;"></div>
<div class="b" style="left:478.27px;top:371.60px;width:4.00px;height:1.00px;background:#b4b4b4;"></div>
<div class="b" style="left:533.53px;top:371.60px;width:4.00px;height:1.00px;background:#b4b4b4;"></div>
<div class="b" style="left:588.80px;top:371.60px;width:4.00px;height:1.00px;background:#b4b4b4;"></div>
<div class="b" style="left:644.07px;top:371.60px;width:4.00px;height:1.00px;background:#b4b4b4;"></div>
<div class="b" style="left:699.33px;top:371.60px;width:4.00px;height:1.00px;background:#b4b4b4;"></div>
<div class="b" style="left:754.60px;top:371.60px;width:4.00px;height:1.00px;background:#b4b4b4;"></div>
<div class="b" style="left:809.87px;top:371.60px;width:4.00px;height:1.00px;background:#b4b4b4;"></div>
<div class="b" style="left:865.13px;top:371.60px;width:4.00px;height:1.00px;background:#b4b4b4;"></div>
<div class="b" style="left:920.40px;top:371.60px;width:4.00px;height:1.00px;background:#b4b4b4;"></div>
<div class="t" style="left:678.80px;width:300px;text-align:right;top:361.40px;font-size:8.4px;color:#2e75b6;font-weight:normal;">64,500</div>
<div class="t" style="left:44.50px;top:373.95px;font-size:8.3px;color:#2e75b6;font-weight:normal;">Installation Cost</div>
<div class="b" style="left:308.00px;top:384.15px;width:4.00px;height:1.00px;background:#b4b4b4;"></div>
<div class="b" style="left:368.50px;top:384.15px;width:4.00px;height:1.00px;background:#b4b4b4;"></div>
<div class="b" style="left:424.00px;top:384.15px;width:4.00px;height:1.00px;background:#b4b4b4;"></div>
<div class="b" style="left:478.27px;top:384.15px;width:4.00px;height:1.00px;background:#b4b4b4;"></div>
<div class="b" style="left:533.53px;top:384.15px;width:4.00px;height:1.00px;background:#b4b4b4;"></div>
<div class="b" style="left:588.80px;top:384.15px;width:4.00px;height:1.00px;background:#b4b4b4;"></div>
<div class="b" style="left:644.07px;top:384.15px;width:4.00px;height:1.00px;background:#b4b4b4;"></div>
<div class="b" style="left:699.33px;top:384.15px;width:4.00px;height:1.00px;background:#b4b4b4;"></div>
<div class="b" style="left:754.60px;top:384.15px;width:4.00px;height:1.00px;background:#b4b4b4;"></div>
<div class="b" style="left:809.87px;top:384.15px;width:4.00px;height:1.00px;background:#b4b4b4;"></div>
<div class="b" style="left:865.13px;top:384.15px;width:4.00px;height:1.00px;background:#b4b4b4;"></div>
<div class="b" style="left:920.40px;top:384.15px;width:4.00px;height:1.00px;background:#b4b4b4;"></div>
<div class="b" style="left:975.00px;top:384.15px;width:4.00px;height:1.00px;background:#b4b4b4;"></div>
<div class="t" style="left:44.50px;top:386.50px;font-size:8.3px;color:#2e75b6;font-weight:normal;">Contingency Cost</div>
<div class="b" style="left:308.00px;top:396.70px;width:4.00px;height:1.00px;background:#b4b4b4;"></div>
<div class="b" style="left:368.50px;top:396.70px;width:4.00px;height:1.00px;background:#b4b4b4;"></div>
<div class="b" style="left:424.00px;top:396.70px;width:4.00px;height:1.00px;background:#b4b4b4;"></div>
<div class="b" style="left:478.27px;top:396.70px;width:4.00px;height:1.00px;background:#b4b4b4;"></div>
<div class="b" style="left:533.53px;top:396.70px;width:4.00px;height:1.00px;background:#b4b4b4;"></div>
<div class="b" style="left:588.80px;top:396.70px;width:4.00px;height:1.00px;background:#b4b4b4;"></div>
<div class="b" style="left:644.07px;top:396.70px;width:4.00px;height:1.00px;background:#b4b4b4;"></div>
<div class="b" style="left:699.33px;top:396.70px;width:4.00px;height:1.00px;background:#b4b4b4;"></div>
<div class="b" style="left:754.60px;top:396.70px;width:4.00px;height:1.00px;background:#b4b4b4;"></div>
<div class="b" style="left:809.87px;top:396.70px;width:4.00px;height:1.00px;background:#b4b4b4;"></div>
<div class="b" style="left:865.13px;top:396.70px;width:4.00px;height:1.00px;background:#b4b4b4;"></div>
<div class="b" style="left:920.40px;top:396.70px;width:4.00px;height:1.00px;background:#b4b4b4;"></div>
<div class="b" style="left:975.00px;top:396.70px;width:4.00px;height:1.00px;background:#b4b4b4;"></div>
<div class="t" style="left:32.20px;top:399.05px;font-size:8.4px;color:#2b2b2b;font-weight:bold;transform:scaleX(0.94);transform-origin:left center;">Total</div>
<div class="t" style="left:13.60px;width:300px;text-align:right;top:399.05px;font-size:8.4px;color:#2e75b6;font-weight:normal;">54,250</div>
<div class="t" style="left:71.20px;width:300px;text-align:right;top:399.05px;font-size:8.4px;color:#2e75b6;font-weight:normal;">54,250</div>
<div class="b" style="left:424.00px;top:409.25px;width:4.00px;height:1.00px;background:#b4b4b4;"></div>
<div class="b" style="left:478.27px;top:409.25px;width:4.00px;height:1.00px;background:#b4b4b4;"></div>
<div class="b" style="left:533.53px;top:409.25px;width:4.00px;height:1.00px;background:#b4b4b4;"></div>
<div class="b" style="left:588.80px;top:409.25px;width:4.00px;height:1.00px;background:#b4b4b4;"></div>
<div class="b" style="left:644.07px;top:409.25px;width:4.00px;height:1.00px;background:#b4b4b4;"></div>
<div class="b" style="left:699.33px;top:409.25px;width:4.00px;height:1.00px;background:#b4b4b4;"></div>
<div class="b" style="left:754.60px;top:409.25px;width:4.00px;height:1.00px;background:#b4b4b4;"></div>
<div class="b" style="left:809.87px;top:409.25px;width:4.00px;height:1.00px;background:#b4b4b4;"></div>
<div class="b" style="left:865.13px;top:409.25px;width:4.00px;height:1.00px;background:#b4b4b4;"></div>
<div class="b" style="left:920.40px;top:409.25px;width:4.00px;height:1.00px;background:#b4b4b4;"></div>
<div class="t" style="left:678.80px;width:300px;text-align:right;top:399.05px;font-size:8.4px;color:#2e75b6;font-weight:normal;">108,500</div>
<div class="t" style="left:32.20px;top:423.90px;font-size:8.6px;color:#111;font-weight:bold;">Feed Silos and Storage</div>
<div class="b" style="left:256.00px;top:440.70px;width:671.40px;height:63.55px;background:#f2f2f2;"></div>
<div class="b" style="left:256.00px;top:452.95px;width:671.40px;height:1.00px;background:#ebebeb;"></div>
<div class="b" style="left:256.00px;top:465.50px;width:671.40px;height:1.00px;background:#ebebeb;"></div>
<div class="b" style="left:256.00px;top:478.05px;width:671.40px;height:1.00px;background:#ebebeb;"></div>
<div class="b" style="left:256.00px;top:490.60px;width:671.40px;height:1.00px;background:#ebebeb;"></div>
<div class="b" style="left:256.00px;top:503.15px;width:671.40px;height:1.00px;background:#ebebeb;"></div>
<div class="t" style="left:44.50px;top:437.90px;font-size:8.3px;color:#2e75b6;font-weight:normal;">Silo Cost</div>
<div class="t" style="left:13.60px;width:300px;text-align:right;top:437.90px;font-size:8.4px;color:#2e75b6;font-weight:normal;">23,500</div>
<div class="t" style="left:71.20px;width:300px;text-align:right;top:437.90px;font-size:8.4px;color:#2e75b6;font-weight:normal;">23,500</div>
<div class="b" style="left:424.00px;top:448.10px;width:4.00px;height:1.00px;background:#b4b4b4;"></div>
<div class="b" style="left:478.27px;top:448.10px;width:4.00px;height:1.00px;background:#b4b4b4;"></div>
<div class="b" style="left:533.53px;top:448.10px;width:4.00px;height:1.00px;background:#b4b4b4;"></div>
<div class="b" style="left:588.80px;top:448.10px;width:4.00px;height:1.00px;background:#b4b4b4;"></div>
<div class="b" style="left:644.07px;top:448.10px;width:4.00px;height:1.00px;background:#b4b4b4;"></div>
<div class="b" style="left:699.33px;top:448.10px;width:4.00px;height:1.00px;background:#b4b4b4;"></div>
<div class="b" style="left:754.60px;top:448.10px;width:4.00px;height:1.00px;background:#b4b4b4;"></div>
<div class="b" style="left:809.87px;top:448.10px;width:4.00px;height:1.00px;background:#b4b4b4;"></div>
<div class="b" style="left:865.13px;top:448.10px;width:4.00px;height:1.00px;background:#b4b4b4;"></div>
<div class="b" style="left:920.40px;top:448.10px;width:4.00px;height:1.00px;background:#b4b4b4;"></div>
<div class="t" style="left:678.80px;width:300px;text-align:right;top:437.90px;font-size:8.4px;color:#2e75b6;font-weight:normal;">47,000</div>
<div class="t" style="left:44.50px;top:450.45px;font-size:8.3px;color:#2e75b6;font-weight:normal;">Number of Silos</div>
<div class="t" style="left:13.60px;width:300px;text-align:right;top:450.45px;font-size:8.4px;color:#2e75b6;font-weight:normal;">2</div>
<div class="t" style="left:71.20px;width:300px;text-align:right;top:450.45px;font-size:8.4px;color:#2e75b6;font-weight:normal;">2</div>
<div class="b" style="left:424.00px;top:460.65px;width:4.00px;height:1.00px;background:#b4b4b4;"></div>
<div class="b" style="left:478.27px;top:460.65px;width:4.00px;height:1.00px;background:#b4b4b4;"></div>
<div class="b" style="left:533.53px;top:460.65px;width:4.00px;height:1.00px;background:#b4b4b4;"></div>
<div class="b" style="left:588.80px;top:460.65px;width:4.00px;height:1.00px;background:#b4b4b4;"></div>
<div class="b" style="left:644.07px;top:460.65px;width:4.00px;height:1.00px;background:#b4b4b4;"></div>
<div class="b" style="left:699.33px;top:460.65px;width:4.00px;height:1.00px;background:#b4b4b4;"></div>
<div class="b" style="left:754.60px;top:460.65px;width:4.00px;height:1.00px;background:#b4b4b4;"></div>
<div class="b" style="left:809.87px;top:460.65px;width:4.00px;height:1.00px;background:#b4b4b4;"></div>
<div class="b" style="left:865.13px;top:460.65px;width:4.00px;height:1.00px;background:#b4b4b4;"></div>
<div class="b" style="left:920.40px;top:460.65px;width:4.00px;height:1.00px;background:#b4b4b4;"></div>
<div class="t" style="left:678.80px;width:300px;text-align:right;top:450.45px;font-size:8.4px;color:#2e75b6;font-weight:normal;">4</div>
<div class="t" style="left:44.50px;top:463.00px;font-size:8.3px;color:#2e75b6;font-weight:normal;">Installation Cost</div>
<div class="t" style="left:13.60px;width:300px;text-align:right;top:463.00px;font-size:8.4px;color:#2e75b6;font-weight:normal;">200</div>
<div class="t" style="left:71.20px;width:300px;text-align:right;top:463.00px;font-size:8.4px;color:#2e75b6;font-weight:normal;">200</div>
<div class="b" style="left:424.00px;top:473.20px;width:4.00px;height:1.00px;background:#b4b4b4;"></div>
<div class="b" style="left:478.27px;top:473.20px;width:4.00px;height:1.00px;background:#b4b4b4;"></div>
<div class="b" style="left:533.53px;top:473.20px;width:4.00px;height:1.00px;background:#b4b4b4;"></div>
<div class="b" style="left:588.80px;top:473.20px;width:4.00px;height:1.00px;background:#b4b4b4;"></div>
<div class="b" style="left:644.07px;top:473.20px;width:4.00px;height:1.00px;background:#b4b4b4;"></div>
<div class="b" style="left:699.33px;top:473.20px;width:4.00px;height:1.00px;background:#b4b4b4;"></div>
<div class="b" style="left:754.60px;top:473.20px;width:4.00px;height:1.00px;background:#b4b4b4;"></div>
<div class="b" style="left:809.87px;top:473.20px;width:4.00px;height:1.00px;background:#b4b4b4;"></div>
<div class="b" style="left:865.13px;top:473.20px;width:4.00px;height:1.00px;background:#b4b4b4;"></div>
<div class="b" style="left:920.40px;top:473.20px;width:4.00px;height:1.00px;background:#b4b4b4;"></div>
<div class="t" style="left:678.80px;width:300px;text-align:right;top:463.00px;font-size:8.4px;color:#2e75b6;font-weight:normal;">400</div>
<div class="t" style="left:44.50px;top:475.55px;font-size:8.3px;color:#2e75b6;font-weight:normal;">Automation Cost</div>
<div class="b" style="left:308.00px;top:485.75px;width:4.00px;height:1.00px;background:#b4b4b4;"></div>
<div class="b" style="left:368.50px;top:485.75px;width:4.00px;height:1.00px;background:#b4b4b4;"></div>
<div class="b" style="left:424.00px;top:485.75px;width:4.00px;height:1.00px;background:#b4b4b4;"></div>
<div class="b" style="left:478.27px;top:485.75px;width:4.00px;height:1.00px;background:#b4b4b4;"></div>
<div class="b" style="left:533.53px;top:485.75px;width:4.00px;height:1.00px;background:#b4b4b4;"></div>
<div class="b" style="left:588.80px;top:485.75px;width:4.00px;height:1.00px;background:#b4b4b4;"></div>
<div class="b" style="left:644.07px;top:485.75px;width:4.00px;height:1.00px;background:#b4b4b4;"></div>
<div class="b" style="left:699.33px;top:485.75px;width:4.00px;height:1.00px;background:#b4b4b4;"></div>
<div class="b" style="left:754.60px;top:485.75px;width:4.00px;height:1.00px;background:#b4b4b4;"></div>
<div class="b" style="left:809.87px;top:485.75px;width:4.00px;height:1.00px;background:#b4b4b4;"></div>
<div class="b" style="left:865.13px;top:485.75px;width:4.00px;height:1.00px;background:#b4b4b4;"></div>
<div class="b" style="left:920.40px;top:485.75px;width:4.00px;height:1.00px;background:#b4b4b4;"></div>
<div class="b" style="left:975.00px;top:485.75px;width:4.00px;height:1.00px;background:#b4b4b4;"></div>
<div class="t" style="left:32.20px;top:488.10px;font-size:8.4px;color:#2b2b2b;font-weight:bold;transform:scaleX(0.94);transform-origin:left center;">Total</div>
<div class="t" style="left:13.60px;width:300px;text-align:right;top:488.10px;font-size:8.4px;color:#2e75b6;font-weight:normal;">47,200</div>
<div class="t" style="left:71.20px;width:300px;text-align:right;top:488.10px;font-size:8.4px;color:#2e75b6;font-weight:normal;">47,200</div>
<div class="b" style="left:424.00px;top:498.30px;width:4.00px;height:1.00px;background:#b4b4b4;"></div>
<div class="b" style="left:478.27px;top:498.30px;width:4.00px;height:1.00px;background:#b4b4b4;"></div>
<div class="b" style="left:533.53px;top:498.30px;width:4.00px;height:1.00px;background:#b4b4b4;"></div>
<div class="b" style="left:588.80px;top:498.30px;width:4.00px;height:1.00px;background:#b4b4b4;"></div>
<div class="b" style="left:644.07px;top:498.30px;width:4.00px;height:1.00px;background:#b4b4b4;"></div>
<div class="b" style="left:699.33px;top:498.30px;width:4.00px;height:1.00px;background:#b4b4b4;"></div>
<div class="b" style="left:754.60px;top:498.30px;width:4.00px;height:1.00px;background:#b4b4b4;"></div>
<div class="b" style="left:809.87px;top:498.30px;width:4.00px;height:1.00px;background:#b4b4b4;"></div>
<div class="b" style="left:865.13px;top:498.30px;width:4.00px;height:1.00px;background:#b4b4b4;"></div>
<div class="b" style="left:920.40px;top:498.30px;width:4.00px;height:1.00px;background:#b4b4b4;"></div>
<div class="t" style="left:678.80px;width:300px;text-align:right;top:488.10px;font-size:8.4px;color:#2e75b6;font-weight:normal;">94,400</div>
<div class="t" style="left:32.20px;top:512.50px;font-size:8.8px;color:#111;font-weight:bold;">Mixing and Batching</div>
<div class="t" style="left:32.20px;top:525.60px;font-size:8.8px;color:#111;font-weight:bold;">Systems</div>
<div class="b" style="left:256.00px;top:540.40px;width:671.40px;height:25.90px;background:#f2f2f2;"></div>
<div class="b" style="left:256.00px;top:552.65px;width:671.40px;height:1.00px;background:#ebebeb;"></div>
<div class="b" style="left:256.00px;top:565.20px;width:671.40px;height:1.00px;background:#ebebeb;"></div>
<div class="t" style="left:44.50px;top:537.60px;font-size:8.3px;color:#2e75b6;font-weight:normal;">Equipment Cost</div>
<div class="t" style="left:13.60px;width:300px;text-align:right;top:537.60px;font-size:8.4px;color:#2e75b6;font-weight:normal;">14,000</div>
<div class="t" style="left:71.20px;width:300px;text-align:right;top:537.60px;font-size:8.4px;color:#2e75b6;font-weight:normal;">14,000</div>
<div class="b" style="left:424.00px;top:547.80px;width:4.00px;height:1.00px;background:#b4b4b4;"></div>
<div class="b" style="left:478.27px;top:547.80px;width:4.00px;height:1.00px;background:#b4b4b4;"></div>
<div class="b" style="left:533.53px;top:547.80px;width:4.00px;height:1.00px;background:#b4b4b4;"></div>
<div class="b" style="left:588.80px;top:547.80px;width:4.00px;height:1.00px;background:#b4b4b4;"></div>
<div class="b" style="left:644.07px;top:547.80px;width:4.00px;height:1.00px;background:#b4b4b4;"></div>
<div class="b" style="left:699.33px;top:547.80px;width:4.00px;height:1.00px;background:#b4b4b4;"></div>
<div class="b" style="left:754.60px;top:547.80px;width:4.00px;height:1.00px;background:#b4b4b4;"></div>
<div class="b" style="left:809.87px;top:547.80px;width:4.00px;height:1.00px;background:#b4b4b4;"></div>
<div class="b" style="left:865.13px;top:547.80px;width:4.00px;height:1.00px;background:#b4b4b4;"></div>
<div class="b" style="left:920.40px;top:547.80px;width:4.00px;height:1.00px;background:#b4b4b4;"></div>
<div class="t" style="left:678.80px;width:300px;text-align:right;top:537.60px;font-size:8.4px;color:#2e75b6;font-weight:normal;">28,000</div>
<div class="t" style="left:44.50px;top:550.15px;font-size:8.3px;color:#2e75b6;font-weight:normal;">Conveyor Cost</div>
<div class="t" style="left:13.60px;width:300px;text-align:right;top:550.15px;font-size:8.4px;color:#2e75b6;font-weight:normal;">12,000</div>
<div class="t" style="left:71.20px;width:300px;text-align:right;top:550.15px;font-size:8.4px;color:#2e75b6;font-weight:normal;">12,000</div>
<div class="b" style="left:424.00px;top:560.35px;width:4.00px;height:1.00px;background:#b4b4b4;"></div>
<div class="b" style="left:478.27px;top:560.35px;width:4.00px;height:1.00px;background:#b4b4b4;"></div>
<div class="b" style="left:533.53px;top:560.35px;width:4.00px;height:1.00px;background:#b4b4b4;"></div>
<div class="b" style="left:588.80px;top:560.35px;width:4.00px;height:1.00px;background:#b4b4b4;"></div>
<div class="b" style="left:644.07px;top:560.35px;width:4.00px;height:1.00px;background:#b4b4b4;"></div>
<div class="b" style="left:699.33px;top:560.35px;width:4.00px;height:1.00px;background:#b4b4b4;"></div>
<div class="b" style="left:754.60px;top:560.35px;width:4.00px;height:1.00px;background:#b4b4b4;"></div>
<div class="b" style="left:809.87px;top:560.35px;width:4.00px;height:1.00px;background:#b4b4b4;"></div>
<div class="b" style="left:865.13px;top:560.35px;width:4.00px;height:1.00px;background:#b4b4b4;"></div>
<div class="b" style="left:920.40px;top:560.35px;width:4.00px;height:1.00px;background:#b4b4b4;"></div>
<div class="t" style="left:678.80px;width:300px;text-align:right;top:550.15px;font-size:8.4px;color:#2e75b6;font-weight:normal;">24,000</div>
<div class="b" style="left:987.50px;top:50.00px;width:12.50px;height:509.50px;background:#f7f7f7;"></div>
<div class="b" style="left:987.30px;top:50.00px;width:0.80px;height:509.50px;background:#e2e2e2;"></div>
<svg style="left:989px;top:52px" width="10" height="8" viewBox="0 0 10 8"><path d="M5 1.5 L8 6 L2 6 Z" fill="#606060"/></svg>
<div class="b" style="left:991.00px;top:62.00px;width:6.00px;height:156.00px;background:#6b6b6b;border-radius:3px;"></div>
<svg style="left:989px;top:550.5px" width="10" height="8" viewBox="0 0 10 8"><path d="M5 6.5 L8 2 L2 2 Z" fill="#606060"/></svg>
<div class="b" style="left:0.00px;top:558.40px;width:1000.00px;height:20.60px;background:#e6e8eb;"></div>
<svg style="left:14px;top:564px" width="10" height="10" viewBox="0 0 10 10"><path d="M6.5 1.5 L3 5 L6.5 8.5" fill="none" stroke="#666" stroke-width="1"/></svg>
<svg style="left:34px;top:564px" width="10" height="10" viewBox="0 0 10 10"><path d="M3.5 1.5 L7 5 L3.5 8.5" fill="none" stroke="#666" stroke-width="1"/></svg>
<div class="b" style="left:56.50px;top:568.20px;width:1.60px;height:1.60px;background:#333;"></div>
<div class="b" style="left:59.50px;top:568.20px;width:1.60px;height:1.60px;background:#333;"></div>
<div class="b" style="left:62.50px;top:568.20px;width:1.60px;height:1.60px;background:#333;"></div>
<div class="t" style="left:-27.50px;width:300px;text-align:center;top:558.50px;font-size:8.77px;color:#333;font-weight:normal;">2028 MRR Dashboard</div>
<div class="b" style="left:176.80px;top:560.30px;width:46.20px;height:16.10px;background:#fdfda0;"></div>
<div class="t" style="left:49.90px;width:300px;text-align:center;top:558.50px;font-size:8.77px;color:#333;font-weight:normal;">IS 2028</div>
<div class="b" style="left:226.00px;top:560.30px;width:43.60px;height:16.10px;background:#fbfbc0;"></div>
<div class="t" style="left:97.80px;width:300px;text-align:center;top:558.50px;font-size:8.77px;color:#333;font-weight:normal;">CF 2028</div>
<div class="t" style="left:147.50px;width:300px;text-align:center;top:558.50px;font-size:8.77px;color:#333;font-weight:normal;">BS 2028</div>
<div class="t" style="left:235.50px;width:300px;text-align:center;top:558.50px;font-size:8.77px;color:#333;font-weight:normal;">Statements Summary 2028</div>
<div class="b" style="left:449.00px;top:559.00px;width:62.50px;height:17.60px;background:#ffffff;"></div>
<div class="b" style="left:457.00px;top:573.60px;width:50.00px;height:1.30px;background:#1e7a45;"></div>
<div class="t" style="left:332.00px;width:300px;text-align:center;top:557.20px;font-size:8.9px;color:#1a1a1a;font-weight:bold;transform:scaleX(0.95);transform-origin:center center;">CAPEX 2028</div>
<div class="b" style="left:519.00px;top:560.30px;width:54.00px;height:16.10px;background:#fbfbc0;"></div>
<div class="t" style="left:396.00px;width:300px;text-align:center;top:558.50px;font-size:8.77px;color:#333;font-weight:normal;">OPEX 2028</div>
<div class="b" style="left:579.70px;top:560.30px;width:70.30px;height:16.10px;background:#fdfda0;"></div>
<div class="t" style="left:464.85px;width:300px;text-align:center;top:558.50px;font-size:8.77px;color:#333;font-weight:normal;">2029 Accounts</div>
<div class="b" style="left:656.00px;top:560.30px;width:101.00px;height:16.10px;background:#fdfda0;"></div>
<div class="t" style="left:556.50px;width:300px;text-align:center;top:558.50px;font-size:8.77px;color:#333;font-weight:normal;">2029 MRR Dashboard</div>
<div class="b" style="left:762.00px;top:560.30px;width:40.00px;height:16.10px;background:#fdfda0;"></div>
<div class="t" style="left:632.00px;width:300px;text-align:center;top:558.50px;font-size:8.77px;color:#333;font-weight:normal;">IS 2029</div>
<div class="b" style="left:807.00px;top:560.30px;width:45.00px;height:16.10px;background:#fdfda0;"></div>
<div class="t" style="left:679.50px;width:300px;text-align:center;top:558.50px;font-size:8.77px;color:#333;font-weight:normal;">CF 2029</div>
<div class="t" style="left:862px;top:558.5px;width:19px;overflow:hidden;font-size:8.9px;color:#333;">BS 2029</div>
<div class="b" style="left:886.80px;top:568.20px;width:1.60px;height:1.60px;background:#333;"></div>
<div class="b" style="left:889.80px;top:568.20px;width:1.60px;height:1.60px;background:#333;"></div>
<div class="b" style="left:892.80px;top:568.20px;width:1.60px;height:1.60px;background:#333;"></div>
<div class="b" style="left:907.00px;top:568.30px;width:8.50px;height:1.00px;background:#444;"></div>
<div class="b" style="left:910.75px;top:564.60px;width:1.00px;height:8.00px;background:#444;"></div>
<div class="b" style="left:931.50px;top:565.20px;width:1.60px;height:1.60px;background:#555;"></div>
<div class="b" style="left:931.50px;top:568.00px;width:1.60px;height:1.60px;background:#555;"></div>
<div class="b" style="left:931.50px;top:570.80px;width:1.60px;height:1.60px;background:#555;"></div>
<svg style="left:943px;top:564px" width="8" height="10" viewBox="0 0 8 10"><path d="M6 1.5 L1.5 5 L6 8.5 Z" fill="#555"/></svg>
<div class="b" style="left:953.80px;top:565.80px;width:21.00px;height:6.00px;background:#6e6e6e;border-radius:3px;"></div>
<svg style="left:979.5px;top:564px" width="8" height="10" viewBox="0 0 8 10"><path d="M1.5 1.5 L6 5 L1.5 8.5 Z" fill="#555"/></svg>
<div class="b" style="left:0.00px;top:579.00px;width:1000.00px;height:12.00px;background:#f3f3f3;"></div>
<div class="b" style="left:0.00px;top:579.00px;width:1000.00px;height:1.20px;background:#fbfbfb;"></div>
<div class="t" style="left:7.50px;top:576.80px;font-size:7px;color:#555;font-weight:normal;">Ready</div>
<svg style="left:39.5px;top:582px" width="10" height="9" viewBox="0 0 10 9"><rect x="0" y="0.5" width="9.5" height="8.5" fill="#6a6a6a"/><path d="M1.5 2 L4 4.5 M4 2 L1.5 4.5" stroke="#ddd" stroke-width="0.9"/><circle cx="6" cy="5.5" r="1.6" fill="#eee"/><circle cx="6" cy="5.5" r="0.8" fill="#222"/></svg>
<svg style="left:59px;top:580px" width="12" height="11" viewBox="0 0 12 11"><circle cx="6" cy="2.2" r="1.3" fill="#555"/><path d="M1.5 4 L10.5 4 M6 4 L6 7 M6 7 L3.5 10.5 M6 7 L8.5 10.5" fill="none" stroke="#555" stroke-width="1"/></svg>
<div class="t" style="left:72.00px;top:576.80px;font-size:6.7px;color:#222;font-weight:bold;">Accessibility: Investigate</div>
<div class="b" style="left:805.00px;top:579.00px;width:28.00px;height:12.00px;background:#e2e2e2;"></div>
<svg style="left:813px;top:581.5px" width="12" height="11" viewBox="0 0 12 11"><path d="M1.5 1.5 H10.5 V9.5 H1.5 Z M1.5 4.2 H10.5 M1.5 6.9 H10.5 M4.5 1.5 V9.5 M7.5 1.5 V9.5" fill="none" stroke="#555" stroke-width="0.9"/></svg>
<svg style="left:839px;top:581.5px" width="12" height="11" viewBox="0 0 12 11"><path d="M1.5 1.5 H10.5 V9.5 H1.5 Z" fill="none" stroke="#555" stroke-width="0.9"/><path d="M3 1.5 V9.5 M4.5 1.5 V9.5 M6 1.5 V9.5 M7.5 1.5 V9.5 M9 1.5 V9.5" stroke="#777" stroke-width="0.7"/></svg>
<svg style="left:865px;top:581.5px" width="12" height="11" viewBox="0 0 12 11"><path d="M1.5 1.5 H10.5 V9.5 H1.5 Z M5.5 1.5 V6 H10.5" fill="none" stroke="#555" stroke-width="0.9"/></svg>
<div class="b" style="left:889.00px;top:585.50px;width:4.00px;height:0.90px;background:#555;"></div>
<div class="b" style="left:895.00px;top:585.60px;width:73.00px;height:0.80px;background:#888;"></div>
<div class="b" style="left:928.50px;top:582.00px;width:2.50px;height:8.00px;background:#444;"></div>
<div class="b" style="left:966.00px;top:585.50px;width:4.00px;height:0.90px;background:#555;"></div>
<div class="b" style="left:967.55px;top:584.00px;width:0.90px;height:4.00px;background:#555;"></div>
<div class="t" style="left:978.00px;top:576.80px;font-size:6.8px;color:#555;font-weight:normal;">100%</div>
</body></html>
